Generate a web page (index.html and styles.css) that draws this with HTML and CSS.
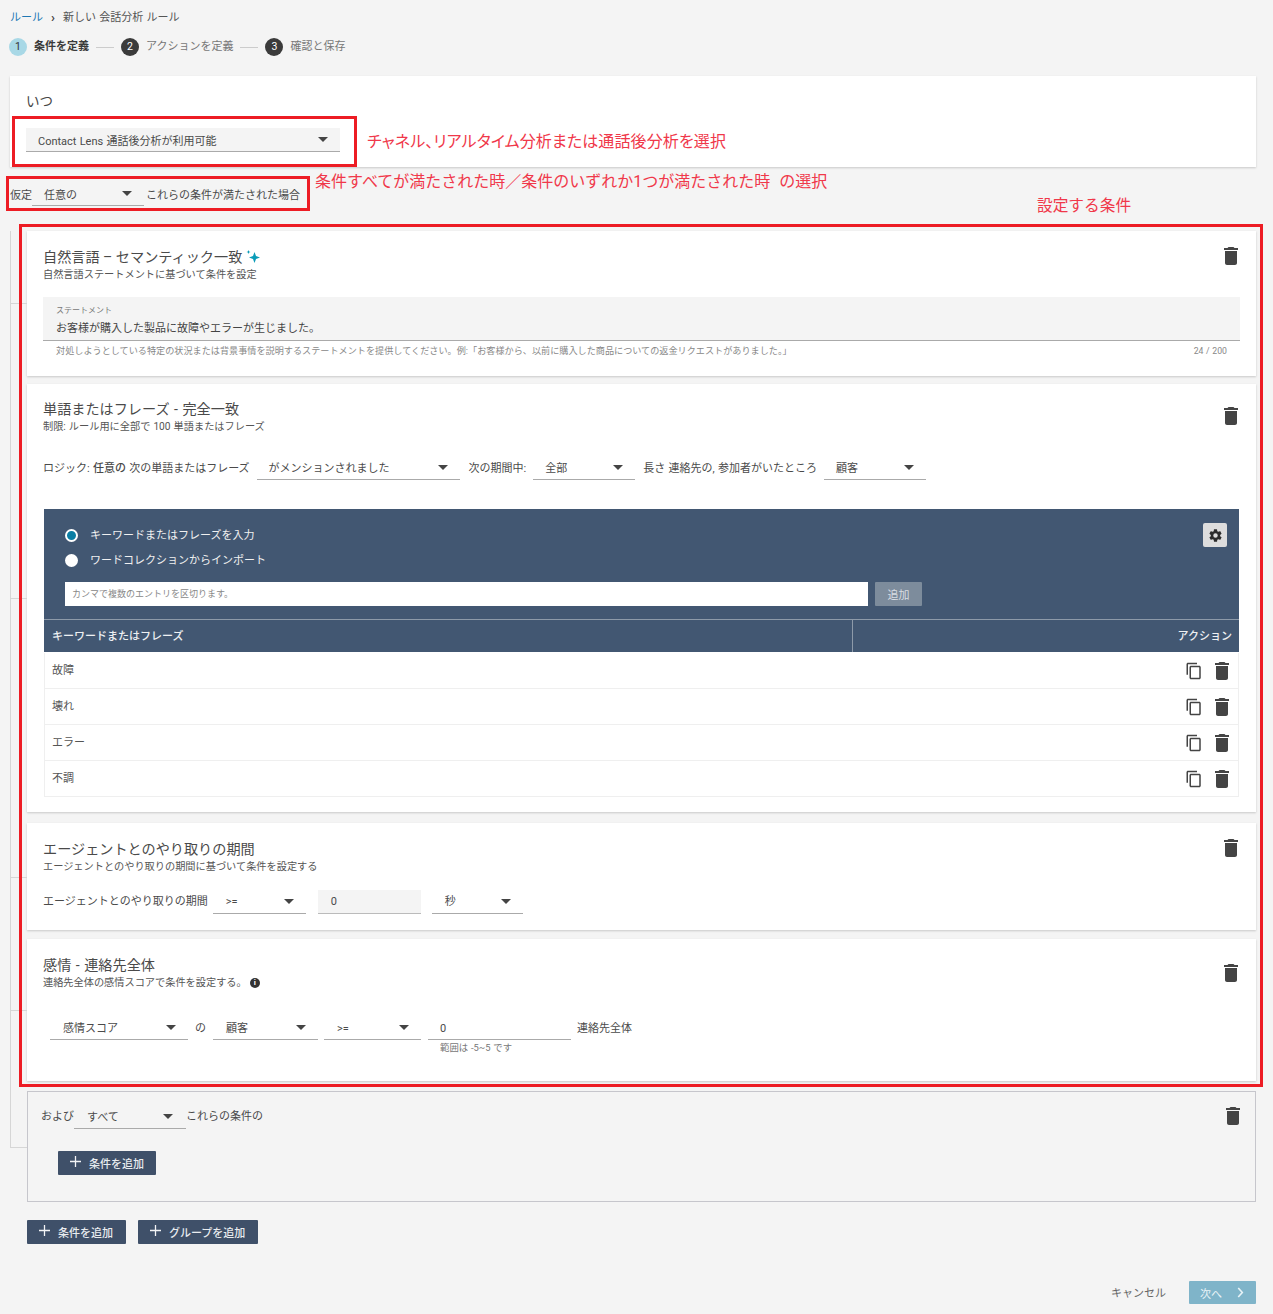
FILE: index.html
```html
<!DOCTYPE html>
<html lang="ja">
<head>
<meta charset="utf-8">
<title>新しい 会話分析 ルール</title>
<link rel="stylesheet" href="styles.css">
</head>
<body>
<svg class="defs" width="0" height="0" aria-hidden="true">
  <symbol id="trash" viewBox="0 0 24 24"><path d="M6 19c0 1.1.9 2 2 2h8c1.1 0 2-.9 2-2V7H6v12zM19 4h-3.5l-1-1h-5l-1 1H5v2h14V4z"/></symbol>
  <symbol id="copy" viewBox="0 0 24 24"><path d="M16 1H4c-1.1 0-2 .9-2 2v14h2V3h12V1zm3 4H8c-1.1 0-2 .9-2 2v14c0 1.1.9 2 2 2h11c1.1 0 2-.9 2-2V7c0-1.1-.9-2-2-2zm0 16H8V7h11v14z"/></symbol>
  <symbol id="plus" viewBox="0 0 12 12"><path d="M5.3 0h1.4v5.3H12v1.4H6.700V12H5.300V6.700H0V5.300h5.300z"/></symbol>
</svg>
<div class="page">
  <nav class="crumbs"><a class="link">ルール</a><span class="sep">›</span><span>新しい 会話分析 ルール</span></nav>
  <div class="steps">
    <span class="num active">1</span><b class="step-on">条件を定義</b><i class="dash"></i>
    <span class="num">2</span><span class="step">アクションを定義</span><i class="dash"></i>
    <span class="num">3</span><span class="step">確認と保存</span>
  </div>

  <section class="when">
    <h2 class="when-title">いつ</h2>
    <div class="sel sel-main"><span>Contact Lens 通話後分析が利用可能</span><i class="caret"></i></div>
  </section>

  <div class="assume">
    <span>仮定</span>
    <div class="sel sel-any"><span>任意の</span><i class="caret"></i></div>
    <span>これらの条件が満たされた場合</span>
  </div>

  <div class="tree">
    <section class="card card-a branch b-a">
      <svg class="icon trash card-trash"><use href="#trash"/></svg>
      <h3 class="title">自然言語 – セマンティック一致
        <svg class="spark" viewBox="0 0 15 15"><path d="M8.500 2 10 6l4 1.500L10 9l-1.500 4L7 9 3 7.500 7 6z"/><path d="M2.500 0l.6 1.400 1.400.6-1.400.6-.6 1.400-.6-1.400L.5 2l1.400-.6z"/></svg>
      </h3>
      <p class="sub">自然言語ステートメントに基づいて条件を設定</p>
      <div class="statement">
        <span class="st-label">ステートメント</span>
        <span class="st-value">お客様が購入した製品に故障やエラーが生じました。</span>
      </div>
      <div class="help-row">
        <span>対処しようとしている特定の状況または背景事情を説明するステートメントを提供してください。例:「お客様から、以前に購入した商品についての返金リクエストがありました。」</span>
        <span class="count">24 / 200</span>
      </div>
    </section>

    <section class="card card-b branch b-b">
      <svg class="icon trash card-trash"><use href="#trash"/></svg>
      <h3 class="title">単語またはフレーズ - 完全一致</h3>
      <p class="sub">制限: ルール用に全部で 100 単語またはフレーズ</p>
      <div class="row logic">
        <span>ロジック: <b class="semi">任意の</b> 次の単語またはフレーズ</span>
        <div class="sel w203"><span>がメンションされました</span><i class="caret"></i></div>
        <span>次の期間中:</span>
        <div class="sel w102"><span>全部</span><i class="caret"></i></div>
        <span>長さ 連絡先の, 参加者がいたところ</span>
        <div class="sel w102"><span>顧客</span><i class="caret"></i></div>
      </div>
      <div class="kw">
        <div class="kw-panel">
          <button class="gear" aria-label="設定">
            <svg viewBox="0 0 24 24"><path d="M19.400 13c.04-.3.060-.65.060-1s-.02-.7-.07-1l2.100-1.650c.2-.15.250-.42.130-.64l-2-3.460c-.12-.22-.38-.3-.61-.22l-2.500 1c-.52-.4-1.080-.73-1.690-.98l-.38-2.650A.49.49 0 0 0 14 2h-4c-.25 0-.46.18-.49.42l-.38 2.650c-.61.25-1.170.59-1.690.98l-2.500-1c-.23-.09-.49 0-.61.220l-2 3.460c-.13.22-.07.49.120.64L4.570 11c-.04.3-.07.66-.07 1s.03.7.07 1l-2.110 1.650c-.19.15-.25.42-.12.64l2 3.460c.12.22.38.3.61.22l2.500-1c.52.4 1.080.73 1.690.98l.38 2.650c.03.24.24.42.49.42h4c.25 0 .46-.18.49-.42l.38-2.650c.61-.25 1.170-.59 1.690-.98l2.500 1c.23.09.49 0 .61-.22l2-3.460c.12-.22.07-.49-.13-.64L19.400 13zM12 15.600a3.600 3.600 0 1 1 0-7.200 3.600 3.600 0 0 1 0 7.200z"/></svg>
          </button>
          <label class="radio-row"><i class="radio on"></i>キーワードまたはフレーズを入力</label>
          <label class="radio-row"><i class="radio"></i>ワードコレクションからインポート</label>
          <div class="add-row">
            <div class="kw-input">カンマで複数のエントリを区切ります。</div>
            <button class="add-btn">追加</button>
          </div>
        </div>
        <div class="kw-head">
          <span class="kw-col">キーワードまたはフレーズ</span>
          <span class="kw-act">アクション</span>
        </div>
        <div class="kw-row"><span>故障</span><span class="acts"><svg class="icon copy"><use href="#copy"/></svg><svg class="icon trash"><use href="#trash"/></svg></span></div>
        <div class="kw-row"><span>壊れ</span><span class="acts"><svg class="icon copy"><use href="#copy"/></svg><svg class="icon trash"><use href="#trash"/></svg></span></div>
        <div class="kw-row"><span>エラー</span><span class="acts"><svg class="icon copy"><use href="#copy"/></svg><svg class="icon trash"><use href="#trash"/></svg></span></div>
        <div class="kw-row"><span>不調</span><span class="acts"><svg class="icon copy"><use href="#copy"/></svg><svg class="icon trash"><use href="#trash"/></svg></span></div>
      </div>
    </section>

    <section class="card card-c branch b-c">
      <svg class="icon trash card-trash"><use href="#trash"/></svg>
      <h3 class="title">エージェントとのやり取りの期間</h3>
      <p class="sub">エージェントとのやり取りの期間に基づいて条件を設定する</p>
      <div class="row dur">
        <span>エージェントとのやり取りの期間</span>
        <div class="sel w93"><span>&gt;=</span><i class="caret"></i></div>
        <div class="num-input">0</div>
        <div class="sel w91"><span>秒</span><i class="caret"></i></div>
      </div>
    </section>

    <section class="card card-d branch b-d">
      <svg class="icon trash card-trash"><use href="#trash"/></svg>
      <h3 class="title">感情 - 連絡先全体</h3>
      <p class="sub">連絡先全体の感情スコアで条件を設定する。<span class="info">i</span></p>
      <div class="row senti">
        <div class="sel w138"><span>感情スコア</span><i class="caret"></i></div>
        <span>の</span>
        <div class="sel w105"><span>顧客</span><i class="caret"></i></div>
        <div class="sel w97"><span>&gt;=</span><i class="caret"></i></div>
        <div class="line-input">0<small class="range">範囲は -5~5 です</small></div>
        <span>連絡先全体</span>
      </div>
    </section>

    <section class="group branch b-e">
      <svg class="icon trash group-trash"><use href="#trash"/></svg>
      <div class="group-row">
        <span>および</span>
        <div class="sel w112"><span>すべて</span><i class="caret"></i></div>
        <span>これらの条件の</span>
      </div>
      <button class="btn"><svg class="plus"><use href="#plus"/></svg>条件を追加</button>
    </section>
  </div>

  <div class="adders">
    <button class="btn"><svg class="plus"><use href="#plus"/></svg>条件を追加</button>
    <button class="btn"><svg class="plus"><use href="#plus"/></svg>グループを追加</button>
  </div>

  <footer class="foot">
    <span class="cancel">キャンセル</span>
    <button class="next">次へ<svg viewBox="0 0 10 12"><path d="M2.500 1 7 6l-4.500 5" fill="none" stroke="currentColor" stroke-width="1.800"/></svg></button>
  </footer>
</div>

<div class="mark m1"></div>
<div class="mark m2"></div>
<div class="mark m3"></div>
<p class="note n1">チャネル、リアルタイム分析または通話後分析を選択</p>
<p class="note n2">条件すべてが満たされた時／条件のいずれか1つが満たされた時 &nbsp;の選択</p>
<p class="note n3">設定する条件</p>
</body>
</html>
```

FILE: styles.css
```css
* { box-sizing: border-box; }
html, body { margin: 0; padding: 0; }
body {
  background: #f4f4f4;
  color: #4a4a4a;
  font-family: Roboto, "Noto Sans CJK JP", sans-serif;
  font-size: 11px;
  line-height: 14px;
  word-spacing: .5px;
  position: relative;
  height: 1314px;
  overflow: hidden;
}
.defs { position: absolute; }
h2, h3, p { margin: 0; font-weight: 400; }
button { font-family: inherit; border: 0; padding: 0; }

.page { padding: 11px 17px 0 10px; }

.crumbs { display: flex; align-items: center; height: 14px; font-size: 11px; color: #555; }
.link { color: #1f78b4; }
.sep { margin: 0 8px; font-size: 13px; font-weight: 700; color: #444; }

.steps { display: flex; align-items: center; height: 20px; margin: 12px 0 0 -1px; color: #777; }
.num {
  width: 18px; height: 18px; border-radius: 50%;
  background: #3b3b3b; color: #fff;
  display: flex; align-items: center; justify-content: center;
  font-size: 10.5px; margin-right: 7px;
}
.num.active { background: #a8d8e6; color: #333; }
.step-on { color: #3a3a3a; font-weight: 700; }
.dash { width: 18px; height: 1px; background: #ccc; margin: 0 7px; }

.when {
  height: 91px; margin-top: 19px; padding: 17px 16px 0;
  background: #fff;
  box-shadow: 0 1px 2px rgba(0,0,0,.18);
}
.when-title { font-size: 13.500px; line-height: 17px; color: #444; }

.sel {
  display: flex; align-items: center; justify-content: space-between;
  height: 24px; padding: 0 12px;
  border-bottom: 1px solid #aaa;
  flex: none;
  color: #4a4a4a;
}
.sel span { margin-top: 2px; }
.caret { width: 0; height: 0; border: 5px solid transparent; border-top: 5px solid #444; border-bottom: 0; flex: none; }
.sel-main { width: 314px; margin-top: 18px; background: #f4f4f4; }
.sel-main span, .sel-any span { margin-top: 4px; }
.sel-any { width: 112px; }
.w203 { width: 203px; }
.w102 { width: 102px; }
.w93 { width: 93px; }
.w91 { width: 91px; }
.w138 { width: 138px; }
.w105 { width: 105px; }
.w97 { width: 97px; }
.w112 { width: 112px; padding: 0 13px; }

.assume { display: flex; align-items: center; height: 24px; margin-top: 15px; }
.assume > span { margin-top: 3px; }
.assume .sel { margin-right: 2px; }

.tree {
  margin-top: 25px;
  padding-left: 17px;
  position: relative;
}
.tree::before {
  content: ""; position: absolute; left: 0; top: 0; width: 1px; height: 917px; background: #d6d6d6;
}
.branch { position: relative; }
.branch::before {
  content: ""; position: absolute; left: -17px; width: 17px; height: 1px; background: #d6d6d6;
}
.b-a::before { top: 72px; }
.b-b::before { top: 214px; }
.b-c::before { top: 54px; }
.b-d::before { top: 71px; }
.b-e::before { top: 55px; left: -18px; }

.card {
  background: #fff;
  padding: 18px 16px 0;
  box-shadow: 0 1px 2px rgba(0,0,0,.18);
}
.card-a { height: 145px; }
.card-b { height: 428px; margin-top: 8px; padding-top: 17px; }
.card-c { height: 107px; margin-top: 11px; }
.card-d { height: 142px; margin-top: 9px; }

.title { font-size: 14.150px; line-height: 17px; word-spacing: 1px; color: #4a4a4a; display: flex; align-items: center; gap: 4px; }
.card-a .title { word-spacing: 0; }
.sub { font-size: 10.200px; line-height: 14px; color: #555; margin-top: 2px; display: flex; align-items: center; }
.spark { width: 15px; height: 15px; fill: #0b9cb8; }

.icon { fill: #444; display: block; }
.trash { width: 24px; height: 24px; }
.card-trash { position: absolute; right: 13px; top: 13px; }
.card-b .card-trash { top: 20px; }
.card-d .card-trash { top: 22px; }
.copy { width: 18px; height: 18px; }

.statement {
  margin-top: 15px; height: 44px; padding: 8px 13px 0;
  background: #f4f4f4; border-bottom: 1px solid #aaa;
  display: flex; flex-direction: column;
}
.st-label { font-size: 8px; line-height: 12px; color: #777; }
.st-value { font-size: 11px; line-height: 16px; margin-top: 4px; color: #444; }
.help-row {
  display: flex; justify-content: space-between;
  padding: 3px 13px 0;
  font-size: 9.150px; line-height: 14px; color: #888;
}
.count { font-size: 8.700px; }

.row { display: flex; align-items: center; }
.logic { margin-top: 22px; height: 24px; }
.logic > span { padding-top: 2px; }
.logic > span:nth-child(1) { margin-right: 7px; }
.logic > span:nth-child(3) { margin: 0 7px 0 9px; }
.logic > span:nth-child(5) { margin: 0 7px 0 8px; }
.semi { font-weight: 500; }

.kw { margin: 29px 0 0 1px; width: 1195px; }
.kw-panel { position: relative; height: 110px; background: #425772; padding: 14px 21px 0; color: #fff; }
.gear {
  position: absolute; right: 12px; top: 14px;
  width: 24px; height: 24px; border-radius: 2px; background: #ddd;
  display: flex; align-items: center; justify-content: center;
}
.gear svg { width: 15px; height: 15px; fill: #2b2b2b; }
.radio-row { display: flex; align-items: center; height: 25px; gap: 12px; color: #f0f0f0; font-size: 11px; }
.radio { width: 13px; height: 13px; border-radius: 50%; background: #fff; flex: none; }
.radio.on { background: #0a7ea4; border: 2.500px solid #fff; }
.add-row { display: flex; gap: 7px; margin-top: 9px; }
.kw-input {
  width: 803px; height: 24px; background: #fff; padding: 0 7px;
  display: flex; align-items: center; font-size: 9px; color: #888;
}
.add-btn { width: 47px; height: 24px; background: #7d8c9c; color: #d8dde2; font-size: 11px; border-radius: 1px; }
.kw-head {
  display: flex; height: 33px; margin-bottom: 1px;
  background: #425772; border-top: 1px solid #8d9aa9;
  color: #eef0f2; font-weight: 500;
}
.kw-col { width: 809px; padding: 2px 8px 0; display: flex; align-items: center; border-right: 1px solid #8d9aa9; }
.kw-act { flex: 1; padding: 2px 7px 0; display: flex; align-items: center; justify-content: flex-end; }
.kw-row {
  height: 36px; display: flex; align-items: center; justify-content: space-between;
  padding: 0 4px 0 7px;
  background: #fff;
  border: 1px solid #efefef; border-top: 0;
  color: #555;
}
.acts { display: flex; align-items: center; gap: 7px; }

.dur { margin-top: 16px; }
.dur > span { margin-right: 5px; }
.dur .sel, .senti .sel { padding-left: 13px; }
.dur .sel span { margin-top: 0; }
.num-input {
  width: 103px; height: 24px; margin: 0 11px 0 12px; padding: 0 13px;
  background: #f4f4f4; border-bottom: 1px solid #bbb;
  display: flex; align-items: center;
}

.info {
  width: 10px; height: 10px; border-radius: 50%; background: #333; color: #fff;
  font-size: 8px; line-height: 10px; text-align: center; font-weight: 700;
  margin-left: 3px; flex: none;
}
.senti { margin: 26px 0 0 7px; position: relative; }
.senti > span { margin-top: 2px; }
.senti > span:nth-child(2) { margin: 2px 7px 0; }
.senti .w97 { margin: 0 6px; }
.line-input {
  position: relative; width: 143px; height: 24px; padding: 2px 12px 0; margin-left: 1px;
  border-bottom: 1px solid #aaa;
  display: flex; align-items: center;
}
.range { position: absolute; left: 12px; top: 26px; font-size: 9.400px; line-height: 12px; color: #777; white-space: nowrap; }
.senti > span:last-child { margin-left: 6px; }

.group {
  margin-top: 10px; height: 111px;
  border: 1px solid #c6c6cc;
  padding: 13px 13px 0;
}
.group-trash { position: absolute; right: 10px; top: 12px; }
.group-row { display: flex; align-items: center; height: 24px; }
.group .btn { margin: 22px 0 0 17px; padding-right: 12px; }

.btn {
  height: 24px; padding: 0 13px 0 12px;
  background: #3f5069; color: #e9ecef;
  font-size: 11px; font-weight: 500;
  display: inline-flex; align-items: center; gap: 8px;
  border-radius: 1px;
}
.plus { width: 11px; height: 11px; fill: #f3f4f6; flex: none; margin-top: -4px; }

.adders { display: flex; gap: 12px; margin: 18px 0 0 17px; }
.foot { display: flex; justify-content: flex-end; align-items: center; gap: 23px; margin-top: 37px; }
.cancel { color: #666; font-size: 11px; padding-top: 2px; }
.next {
  width: 67px; height: 23px; background: #7fb4c9; color: #e8f3f7;
  font-size: 11px; border-radius: 1px;
  display: flex; align-items: center; justify-content: center; gap: 14px;
}
.next svg { width: 9px; height: 11px; }

.mark { position: absolute; border: 3px solid #ed1c24; pointer-events: none; }
.m1 { left: 12px; top: 116px; width: 345px; height: 51px; }
.m2 { left: 6px; top: 176px; width: 304px; height: 35px; }
.m3 { left: 19px; top: 224px; width: 1244px; height: 863px; }
.note {
  position: absolute; margin: 0; color: #f0384a; font-size: 16px; line-height: 20px; white-space: nowrap;
}
.n1 { left: 367px; top: 132px; font-feature-settings: "palt"; letter-spacing: .12px; }
.n2 { left: 315px; top: 172px; }
.n3 { left: 1037px; top: 196px; font-size: 15.700px; }
```
